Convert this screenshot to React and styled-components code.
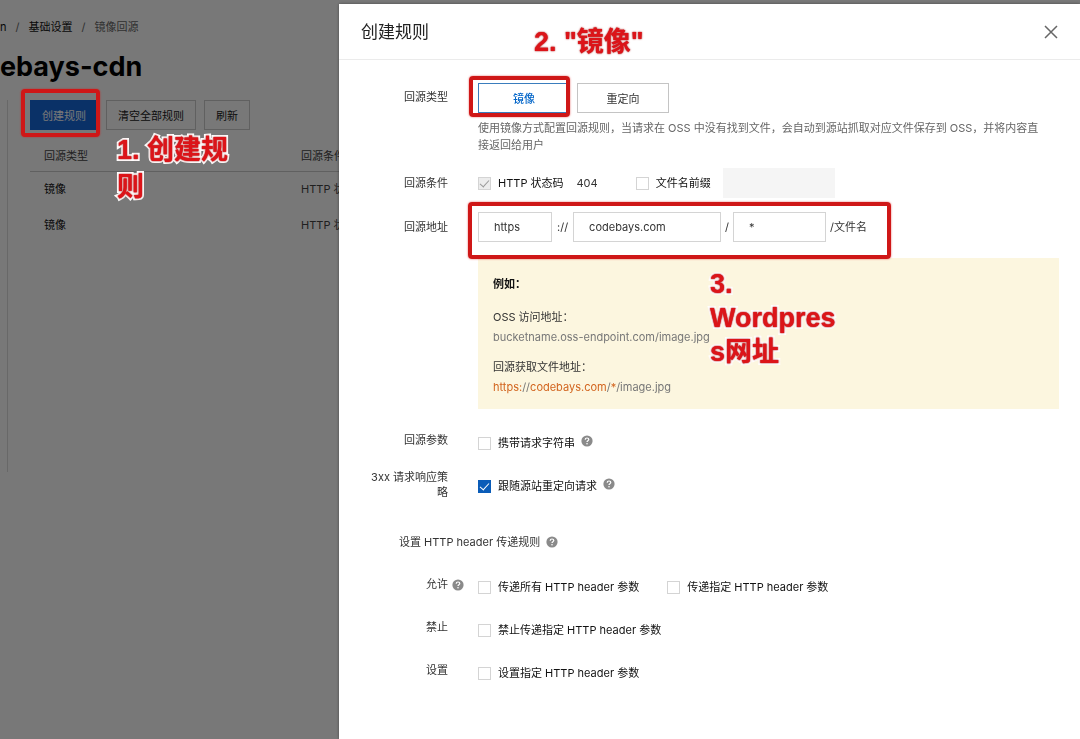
import { useState } from "react";
import styled, { createGlobalStyle, css } from "styled-components";

const GlobalStyle = createGlobalStyle`
  * {
    box-sizing: border-box;
  }
  body {
    margin: 0;
    background: #ffffff;
    color: #333333;
    font-family: Inter, "Noto Sans CJK SC", sans-serif;
    font-size: 11px;
    line-height: 16px;
  }
  button,
  input {
    font-family: inherit;
    font-size: inherit;
    color: inherit;
  }
`;

/* page behind the drawer */
const Page = styled.div`
  min-height: 100vh;
  padding-top: 19px;
  overflow: hidden;
`;
const Breadcrumb = styled.nav`
  display: flex;
  gap: 9px;
  color: #666666;
  a {
    color: #111111;
    text-decoration: none;
  }
`;
const PageTitle = styled.h1`
  margin: 12px 0 13px;
  color: #000000;
  font-size: 27px;
  line-height: 40px;
  font-weight: 700;
`;
const PageBody = styled.main`
  min-height: 372px;
  margin-left: 7px;
  padding-left: 22px;
  border-left: 1px solid #dddddd;
`;
const Toolbar = styled.div`
  display: flex;
  gap: 8px;
`;
const ToolButton = styled.button`
  height: 30px;
  padding: 0 11px;
  border: 1px solid ${(props) => (props.$primary ? "#1668dc" : "#cccccc")};
  background: ${(props) => (props.$primary ? "#1668dc" : "transparent")};
  color: ${(props) => (props.$primary ? "#ffffff" : "#222222")};
  cursor: pointer;
`;
const RuleTable = styled.table`
  width: 100%;
  margin-top: 8px;
  border-collapse: collapse;
  table-layout: fixed;
  th,
  td {
    height: 36px;
    padding: 0 14px;
    text-align: left;
    font-weight: normal;
    color: #444444;
  }
  th {
    height: 33px;
    padding-top: 3px;
    border-bottom: 1px solid #cccccc;
  }
  th:first-child {
    width: 257px;
  }
  td:first-child {
    color: #111111;
  }
`;
const Backdrop = styled.div`
  position: fixed;
  inset: 0;
  background: rgba(0, 0, 0, 0.53);
`;

/* drawer */
const Drawer = styled.aside`
  position: fixed;
  top: 4px;
  right: 0;
  bottom: 0;
  left: 339px;
  overflow: auto;
  background: #ffffff;
  box-shadow: 0 0 3px rgba(0, 0, 0, 0.4);
`;
const DrawerHeader = styled.header`
  display: flex;
  align-items: center;
  justify-content: space-between;
  height: 56px;
  padding: 0 22px;
  border-bottom: 1px solid #ebebeb;
  h2 {
    margin: 0;
    font-size: 17px;
    line-height: 24px;
    font-weight: normal;
    color: #222222;
  }
`;
const CloseButton = styled.button`
  display: flex;
  padding: 0;
  border: none;
  background: none;
  cursor: pointer;
`;
const Form = styled.form`
  padding: 23px 21px 20px 22px;
`;
const Row = styled.div`
  display: grid;
  grid-template-columns: 87px 1fr;
  column-gap: 30px;
  margin-bottom: ${(props) => props.$space || 14}px;
`;
const RowLabel = styled.div`
  padding-top: ${(props) => props.$top || 0}px;
  line-height: 15px;
  text-align: right;
`;
const Line = styled.div`
  display: flex;
  align-items: center;
  gap: ${(props) => props.$gap || 0}px;
  height: ${(props) => props.$height || 20}px;
`;
const TypeButton = styled.button`
  width: 92px;
  height: 30px;
  padding: 0;
  border: 1px solid ${(props) => (props.$active ? "#3a7dbd" : "#c4c4c4")};
  background: #ffffff;
  color: ${(props) => (props.$active ? "#0064c8" : "#333333")};
  font-weight: ${(props) => (props.$active ? 500 : 400)};
  cursor: pointer;
`;
const Description = styled.p`
  margin: 7px 0 0;
  padding-right: 16px;
  line-height: 17px;
  color: #666666;
`;
const CheckLabel = styled.label`
  display: flex;
  align-items: center;
  gap: 7px;
  color: #111111;
`;
const Checkbox = styled.input`
  appearance: none;
  display: flex;
  justify-content: center;
  width: 13px;
  height: 13px;
  margin: 0;
  border: 1px solid #d4d4d4;
  background: #ffffff;
  ${(props) =>
    props.checked &&
    css`
      border-color: ${props.disabled ? "#d4d4d4" : "#0a5cb8"};
      background: ${props.disabled ? "#ececec" : "#0a5cb8"};
      &::after {
        content: "";
        width: 4px;
        height: 8px;
        border: solid ${props.disabled ? "#999999" : "#ffffff"};
        border-width: 0 1px 1px 0;
        transform: rotate(42deg);
      }
    `}
`;
const StatusCode = styled.span`
  margin: 0 38px 0 13px;
`;
const TextField = styled.input`
  width: ${(props) => props.$width}px;
  height: 30px;
  padding: 0 15px;
  border: 1px solid #d4d4d4;
  border-radius: 0;
  background: #ffffff;
  &:disabled {
    margin-left: 12px;
    border-color: #f5f5f5;
    background: #f5f5f5;
  }
`;
const Separator = styled.span`
  padding: 0 ${(props) => (props.$wide ? 5 : 4)}px;
`;
const Example = styled.div`
  margin: 16px 0 10px;
  padding: 17px 15px 12px;
  background: #fcf6df;
  h3 {
    margin: 0 0 14px;
    font-size: 11px;
    line-height: 18px;
    font-weight: bold;
    color: #111111;
  }
  p {
    margin: 0 0 10px;
    line-height: 20px;
  }
  p:last-child {
    margin: 0;
  }
  span {
    color: #777777;
  }
  em {
    font-style: normal;
    color: #d2641e;
  }
`;
const SectionTitle = styled.h3`
  display: flex;
  align-items: center;
  gap: 6px;
  margin: 30px 38px 25px;
  font-size: 11px;
  line-height: 20px;
  font-weight: normal;
`;
const HelpButton = styled.button`
  display: inline-flex;
  padding: 0;
  border: none;
  background: none;
  vertical-align: middle;
  cursor: help;
  margin: ${(props) => props.$margin || "0"};
`;

/* red tutorial marks drawn over the screen */
const Mark = styled.div`
  position: fixed;
  top: ${(props) => props.$top}px;
  left: ${(props) => props.$left}px;
  width: ${(props) => props.$width}px;
  height: ${(props) => props.$height}px;
  border: 4px solid #cf1717;
  border-radius: 4px;
  box-shadow: 0 0 2px rgba(220, 20, 20, 0.7);
  pointer-events: none;
`;
const Note = styled.div`
  position: fixed;
  top: ${(props) => props.$top}px;
  left: ${(props) => props.$left}px;
  width: ${(props) => props.$width}px;
  color: #dc1419;
  font-family: "Liberation Sans", "Noto Sans CJK SC", sans-serif;
  font-size: 27px;
  line-height: ${(props) => props.$line || 34}px;
  font-weight: bold;
  word-break: break-all;
  -webkit-text-stroke: 4px #ffffff;
  paint-order: stroke fill;
  text-shadow: 0 0 2px #b43c3c, 0 0 1px #c83c3c;
  pointer-events: none;
`;

function Help({ margin }) {
  return (
    <HelpButton type="button" aria-label="帮助" $margin={margin}>
      <svg width="12" height="12" viewBox="0 0 12 12">
        <circle cx="6" cy="6" r="5.6" fill="#8a8a8a" />
        <path
          d="M4.2 4.8C4.2 3.6 5 3 6 3s1.8.6 1.8 1.6c0 1.1-1.8 1.2-1.8 2.4"
          fill="none"
          stroke="#fff"
          strokeWidth="1.2"
        />
        <circle cx="6" cy="8.8" r=".8" fill="#fff" />
      </svg>
    </HelpButton>
  );
}

function Check({ children, checked, disabled }) {
  const [on, setOn] = useState(!!checked);
  return (
    <CheckLabel>
      <Checkbox
        type="checkbox"
        checked={on}
        disabled={disabled}
        onChange={(ev) => setOn(ev.target.checked)}
      />
      {children}
    </CheckLabel>
  );
}

export default function App() {
  const [type, setType] = useState("mirror");
  const [protocol, setProtocol] = useState("https");
  const [host, setHost] = useState("codebays.com");
  const [path, setPath] = useState("*");

  return (
    <>
      <GlobalStyle />
      <Page>
        <Breadcrumb>
          <a href="#bucket">n</a>
          <span>/</span>
          <a href="#settings">基础设置</a>
          <span>/</span>
          <span>镜像回源</span>
        </Breadcrumb>
        <PageTitle>ebays-cdn</PageTitle>
        <PageBody>
          <Toolbar>
            <ToolButton $primary>创建规则</ToolButton>
            <ToolButton>清空全部规则</ToolButton>
            <ToolButton>刷新</ToolButton>
          </Toolbar>
          <RuleTable>
            <thead>
              <tr>
                <th>回源类型</th>
                <th>回源条件</th>
              </tr>
            </thead>
            <tbody>
              <tr>
                <td>镜像</td>
                <td>HTTP 状态码</td>
              </tr>
              <tr>
                <td>镜像</td>
                <td>HTTP 状态码</td>
              </tr>
            </tbody>
          </RuleTable>
        </PageBody>
      </Page>
      <Backdrop />

      <Drawer>
        <DrawerHeader>
          <h2>创建规则</h2>
          <CloseButton aria-label="关闭">
            <svg width="14" height="14" viewBox="0 0 14 14">
              <path d="M1 1l12 12M13 1L1 13" stroke="#666" strokeWidth="1.5" />
            </svg>
          </CloseButton>
        </DrawerHeader>
        <Form onSubmit={(ev) => ev.preventDefault()}>
          <Row>
            <RowLabel $top={7}>回源类型</RowLabel>
            <div>
              <Line $gap={7} $height={30}>
                <TypeButton
                  type="button"
                  $active={type === "mirror"}
                  onClick={() => setType("mirror")}
                >
                  镜像
                </TypeButton>
                <TypeButton
                  type="button"
                  $active={type === "redirect"}
                  onClick={() => setType("redirect")}
                >
                  重定向
                </TypeButton>
              </Line>
              <Description>
                使用镜像方式配置回源规则，当请求在 OSS
                中没有找到文件，会自动到源站抓取对应文件保存到
                OSS，并将内容直接返回给用户
              </Description>
            </div>
          </Row>
          <Row>
            <RowLabel $top={8}>回源条件</RowLabel>
            <Line $height={30}>
              <Check checked disabled>
                HTTP 状态码
              </Check>
              <StatusCode>404</StatusCode>
              <Check>文件名前缀</Check>
              <TextField $width={112} disabled aria-label="文件名前缀" />
            </Line>
          </Row>
          <Row>
            <RowLabel $top={8}>回源地址</RowLabel>
            <div>
              <Line $height={30}>
                <TextField
                  $width={74}
                  aria-label="协议"
                  value={protocol}
                  onChange={(ev) => setProtocol(ev.target.value)}
                />
                <Separator $wide>://</Separator>
                <TextField
                  $width={148}
                  aria-label="域名"
                  value={host}
                  onChange={(ev) => setHost(ev.target.value)}
                />
                <Separator>/</Separator>
                <TextField
                  $width={93}
                  aria-label="路径"
                  value={path}
                  onChange={(ev) => setPath(ev.target.value)}
                />
                <Separator>/文件名</Separator>
              </Line>
              <Example>
                <h3>例如：</h3>
                <p>
                  OSS 访问地址：
                  <br />
                  <span>bucketname.oss-endpoint.com/image.jpg</span>
                </p>
                <p>
                  回源获取文件地址：
                  <br />
                  <span>
                    <em>{protocol}:</em>//<em>{host}</em>/<em>{path}</em>
                    /image.jpg
                  </span>
                </p>
              </Example>
            </div>
          </Row>
          <Row $space={17}>
            <RowLabel>回源参数</RowLabel>
            <Line>
              <Check>携带请求字符串</Check>
              <Help margin="0 0 4px 6px" />
            </Line>
          </Row>
          <Row>
            <RowLabel>3xx 请求响应策略</RowLabel>
            <Line $height={32}>
              <Check checked>跟随源站重定向请求</Check>
              <Help margin="0 0 4px 6px" />
            </Line>
          </Row>
          <SectionTitle>
            设置 HTTP header 传递规则
            <Help />
          </SectionTitle>
          <Row $space={23}>
            <RowLabel>
              允许
              <Help margin="0 -16px 0 4px" />
            </RowLabel>
            <Line $gap={28}>
              <Check>传递所有 HTTP header 参数</Check>
              <Check>传递指定 HTTP header 参数</Check>
            </Line>
          </Row>
          <Row $space={23}>
            <RowLabel>禁止</RowLabel>
            <Line>
              <Check>禁止传递指定 HTTP header 参数</Check>
            </Line>
          </Row>
          <Row $space={23}>
            <RowLabel>设置</RowLabel>
            <Line>
              <Check>设置指定 HTTP header 参数</Check>
            </Line>
          </Row>
        </Form>
      </Drawer>

      <Mark $left={21} $top={89} $width={79} $height={48} />
      <Mark $left={469} $top={76} $width={101} $height={41} />
      <Mark $left={468} $top={202} $width={423} $height={57} />
      <Note $left={117} $top={132} $width={120} $line={37}>
        1. 创建规则
      </Note>
      <Note $left={534} $top={25} $width={140}>
        2. "镜像"
      </Note>
      <Note $left={710} $top={267} $width={130}>
        3.
        <br />
        Wordpress网址
      </Note>
    </>
  );
}
